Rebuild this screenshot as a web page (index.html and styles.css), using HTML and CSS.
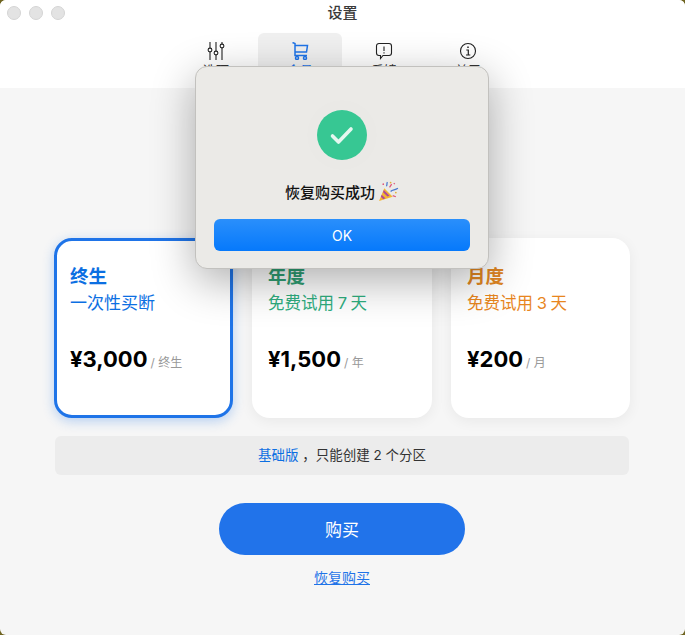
FILE: index.html
```html
<!DOCTYPE html>
<html lang="zh-CN">
<head>
  <meta charset="UTF-8">
  <meta name="viewport" content="width=device-width, initial-scale=1.0">
  <title>设置</title>
  <link rel="stylesheet" href="styles.css">
</head>
<body>
  <div class="window">

    <!-- Title bar and tabs -->
    <header class="header">
      <div class="titlebar">
        <div class="lights">
          <span class="light"></span>
          <span class="light"></span>
          <span class="light"></span>
        </div>
        <div class="title">设置</div>
      </div>
      <nav class="tabs">
        <div class="tab">
          <svg class="tab-icon" viewBox="0 0 18 18" fill="none" stroke="#222" stroke-width="1.1">
            <path d="M3 0v6M3 10v8M9 0v9M9 13v5M15 0v2M15 6v12"/>
            <circle cx="3" cy="8" r="1.9"/>
            <circle cx="9" cy="11" r="1.9"/>
            <circle cx="15" cy="4" r="1.9"/>
          </svg>
          <span>选项</span>
        </div>
        <div class="tab active">
          <svg class="tab-icon" viewBox="0 0 18 18" fill="none" stroke="#1f74e8" stroke-width="1.5">
            <path d="M1.500 0.500l2.500 1v12h12M4 3.500h12.500l-1 6.500h-11.500"/>
            <circle cx="6" cy="16" r="1.500"/>
            <circle cx="14" cy="16" r="1.500"/>
          </svg>
          <span>会员</span>
        </div>
        <div class="tab">
          <svg class="tab-icon" viewBox="0 0 18 18" fill="none" stroke="#222" stroke-width="1.1">
            <path d="M4 1.500h10a2.500 2.500 0 0 1 2.500 2.500v7a2.500 2.500 0 0 1-2.500 2.500h-6l-2.500 3v-3h-1.500a2.500 2.500 0 0 1-2.500-2.500v-7a2.500 2.500 0 0 1 2.500-2.500z"/>
            <path d="M9 4.500v4.500M9 10.300v1.200"/>
          </svg>
          <span>反馈</span>
        </div>
        <div class="tab">
          <svg class="tab-icon" viewBox="0 0 18 18" fill="none" stroke="#222" stroke-width="1.1">
            <circle cx="9" cy="9" r="7.500"/>
            <path d="M7.300 8h2v5M7 13h4.300" stroke-width="1.200"/>
            <path d="M9 4.500v1.500" stroke-width="1.500"/>
          </svg>
          <span>关于</span>
        </div>
      </nav>
    </header>

    <!-- Plans -->
    <main class="content">
      <div class="plans">
        <div class="plan selected">
          <h3 class="plan-name blue">终生</h3>
          <div class="plan-desc blue">一次性买断</div>
          <div class="plan-price"><b>¥3,000</b> <span>/ 终生</span></div>
        </div>
        <div class="plan">
          <h3 class="plan-name green">年度</h3>
          <div class="plan-desc green">免费试用 7 天</div>
          <div class="plan-price"><b>¥1,500</b> <span>/ 年</span></div>
        </div>
        <div class="plan">
          <h3 class="plan-name orange">月度</h3>
          <div class="plan-desc orange">免费试用 3 天</div>
          <div class="plan-price"><b>¥200</b> <span>/ 月</span></div>
        </div>
      </div>

      <div class="notice"><span class="blue">基础版</span> ，只能创建 2 个分区</div>

      <button class="buy-btn">购买</button>
      <a class="restore" href="#">恢复购买</a>
    </main>

    <!-- Success dialog -->
    <div class="dialog">
      <div class="check">
        <svg viewBox="0 0 50 50" width="50" height="50" fill="none" stroke="#e6f7f0" stroke-width="3.600" stroke-linecap="round" stroke-linejoin="round">
          <path d="M15.500 26l6 6 12.500-13"/>
        </svg>
      </div>
      <div class="dialog-text">
        <span>恢复购买成功</span>
        <svg class="party" viewBox="0 0 20 20" width="21" height="21">
          <path d="M1 19l5-12 8 8z" fill="#f2b632"/>
          <path d="M3.500 13l3.500 3.500-2 .8-2.300-2.300zM5.500 8.500l5.500 5.500-2 .8-4.200-4.200z" fill="#b0489a"/>
          <path d="M8 5c1-1.500 0-2.500 1-4" stroke="#4a78d0" stroke-width="1.200" fill="none"/>
          <path d="M12 10c2-2 4-1 7-3" stroke="#4a78d0" stroke-width="1.200" fill="none"/>
          <path d="M11 6l2-3M15 2l1 1M14 14l3 1" stroke="#e0557a" stroke-width="1.200" fill="none"/>
          <circle cx="12" cy="1.500" r=".8" fill="#e0b030"/>
          <circle cx="17" cy="11" r=".8" fill="#e0b030"/>
          <circle cx="5" cy="3" r=".8" fill="#e0557a"/>
        </svg>
      </div>
      <button class="ok-btn">OK</button>
    </div>

  </div>
</body>
</html>
```

FILE: styles.css
```css
/* General Styles */
* {
  box-sizing: border-box;
}

html, body {
  margin: 0;
  height: 100%;
}

body {
  font-family: Inter, "Noto Sans CJK SC", sans-serif;
  background-color: #6f6420;
  overflow: hidden;
}

.window {
  position: relative;
  display: flex;
  flex-direction: column;
  height: 635px;
  background-color: #f6f6f6;
  border-radius: 6px;
  overflow: hidden;
}

/* Header */
.header {
  height: 88px;
  background-color: #fff;
}

.titlebar {
  display: flex;
  align-items: center;
  justify-content: center;
  position: relative;
  height: 26px;
}

.lights {
  position: absolute;
  left: 7px;
  top: 6px;
  display: flex;
  gap: 8px;
}

.light {
  width: 14px;
  height: 14px;
  background-color: #e3e3e3;
  border: 1px solid #d4d4d4;
  border-radius: 50%;
}

.title {
  margin-bottom: 3px;
  font-size: 15px;
  font-weight: 500;
  color: #3a3a3a;
}

.tabs {
  display: flex;
  justify-content: center;
  margin-top: 7px;
  padding-right: 1px;
}

.tab {
  display: flex;
  flex-direction: column;
  align-items: center;
  width: 84px;
  height: 50px;
  padding-top: 9px;
  font-size: 13px;
  line-height: 16px;
  color: #333;
  border-radius: 6px;
}

.tab.active {
  background-color: #f0f0f0;
  color: #1f74e8;
}

.tab-icon {
  width: 18px;
  height: 18px;
  margin-bottom: 2px;
}

/* Plans */
.content {
  display: flex;
  flex-direction: column;
  align-items: center;
  padding: 150px 55px 0 54px;
}

.plans {
  display: grid;
  grid-template-columns: 179px 180px 179px;
  gap: 19px;
  width: 576px;
}

.plan {
  height: 180px;
  padding: 26px 15px 0 16px;
  background-color: #fff;
  border-radius: 18px;
  box-shadow: 0 3px 14px rgba(0, 0, 0, 0.06);
}

.plan.selected {
  padding: 23px 12px 0 13px;
  border: 3px solid #1f74e8;
  box-shadow: 0 3px 12px rgba(31, 116, 232, 0.3);
}

.plan-name {
  margin: 0;
  font-size: 18.500px;
  font-weight: 700;
  line-height: 24px;
}

.plan-desc {
  margin-top: 4px;
  font-size: 16.500px;
  line-height: 22px;
  word-spacing: -1px;
}

.plan.selected .plan-desc {
  font-size: 17px;
}

.plan-price {
  display: flex;
  align-items: baseline;
  gap: 3px;
  margin-top: 32px;
  color: #999;
  font-size: 12px;
}

.plan-price b {
  font-size: 22px;
  font-weight: 700;
  color: #000;
}

.blue {
  color: #0c6fe2;
}

.green {
  color: #2fae7f;
}

.orange {
  color: #e8861e;
}

.plan-name.green {
  color: #2fa074;
}

.plan-name.orange {
  color: #e08622;
}

.notice {
  width: 574px;
  height: 39px;
  margin-top: 18px;
  font-size: 13.500px;
  line-height: 39px;
  text-align: center;
  color: #333;
  background-color: #ececec;
  border-radius: 6px;
}

.buy-btn {
  width: 246px;
  height: 52px;
  margin-top: 28px;
  padding-bottom: 3px;
  font-family: inherit;
  font-size: 17px;
  color: #fff;
  background-color: #2173ea;
  border: none;
  border-radius: 26px;
}

.restore {
  margin-top: 12px;
  font-size: 14px;
  color: #1f74e8;
}

/* Dialog */
.dialog {
  position: absolute;
  left: 195px;
  top: 66px;
  display: flex;
  flex-direction: column;
  align-items: center;
  width: 294px;
  height: 203px;
  padding: 43px 18px 0 18px;
  background-color: #ebeae7;
  border: 1px solid #c2c1be;
  border-radius: 12px;
  box-shadow: 0 12px 44px rgba(0, 0, 0, 0.32);
}

.check {
  width: 50px;
  height: 50px;
  background-color: #37c793;
  border-radius: 50%;
  box-shadow: 0 0 40px rgba(0, 0, 0, 0.02);
}

.dialog-text {
  display: flex;
  align-items: center;
  gap: 3px;
  height: 24px;
  margin-top: 19px;
  font-size: 15px;
  font-weight: 500;
  color: #111;
}

.ok-btn {
  width: 256px;
  height: 32px;
  margin-top: 16px;
  font-family: inherit;
  font-size: 14px;
  color: #fff;
  background: linear-gradient(#2a8ffb, #0679fb);
  border: none;
  border-radius: 6px;
}
```
